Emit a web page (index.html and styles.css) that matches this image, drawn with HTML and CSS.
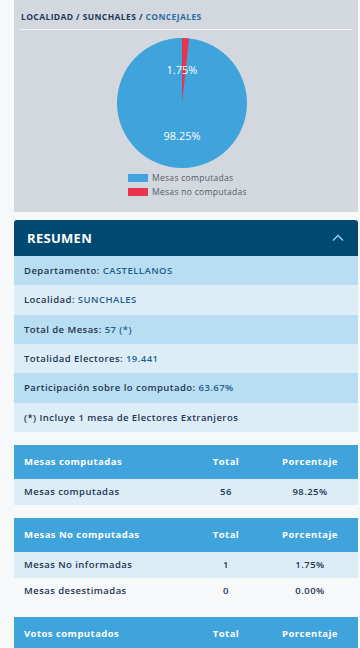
FILE: index.html
```html
<!DOCTYPE html>
<html lang="es">
<head>
    <meta charset="UTF-8">
    <meta name="viewport" content="width=device-width, initial-scale=1.0">
    <title>Resultados - Concejales</title>
    <link rel="stylesheet" href="styles.css">
</head>
<body>
    <div class="container">
        <!-- grafico -->
        <div class="chart-card">
            <div class="breadcrumb">
                <span>LOCALIDAD</span> / <span>SUNCHALES</span> / <span class="current">CONCEJALES</span>
            </div>
            <div class="pie-wrap">
                <svg class="pie" width="132" height="132" viewBox="0 0 132 132">
                    <circle cx="66" cy="66" r="65" fill="#3fa3dc"/>
                    <path d="M66 66 L66 1 A65 65 0 0 1 73.1 1.4 Z" fill="#e8344f"/>
                    <text x="66" y="37" class="pie-label">1.75%</text>
                    <text x="66" y="103" class="pie-label">98.25%</text>
                </svg>
            </div>
            <div class="legend">
                <div class="legend-item"><span class="swatch blue"></span>Mesas computadas</div>
                <div class="legend-item"><span class="swatch red"></span>Mesas no computadas</div>
            </div>
        </div>

        <!-- resumen -->
        <div class="resumen">
            <div class="resumen-head">
                <span>RESUMEN</span>
                <svg width="12" height="8" viewBox="0 0 12 8"><path d="M1 6.5 L6 1.5 L11 6.5" fill="none" stroke="#9fd0ee" stroke-width="1.3"/></svg>
            </div>
            <div class="row dark">Departamento: <span class="val">CASTELLANOS</span></div>
            <div class="row">Localidad: <span class="val">SUNCHALES</span></div>
            <div class="row dark">Total de Mesas: <span class="val">57 (*)</span></div>
            <div class="row">Totalidad Electores: <span class="val">19.441</span></div>
            <div class="row dark">Participación sobre lo computado: <span class="val">63.67%</span></div>
            <div class="row">(*) Incluye 1 mesa de Electores Extranjeros</div>
        </div>

        <table class="tabla">
            <thead>
                <tr><th>Mesas computadas</th><th>Total</th><th>Porcentaje</th></tr>
            </thead>
            <tbody>
                <tr class="light"><td>Mesas computadas</td><td>56</td><td>98.25%</td></tr>
            </tbody>
        </table>

        <table class="tabla">
            <thead>
                <tr><th>Mesas No computadas</th><th>Total</th><th>Porcentaje</th></tr>
            </thead>
            <tbody>
                <tr class="light"><td>Mesas No informadas</td><td>1</td><td>1.75%</td></tr>
                <tr><td>Mesas desestimadas</td><td>0</td><td>0.00%</td></tr>
            </tbody>
        </table>

        <table class="tabla">
            <thead>
                <tr><th>Votos computados</th><th>Total</th><th>Porcentaje</th></tr>
            </thead>
        </table>
    </div>
</body>
</html>
```

FILE: styles.css
```css
body {
    margin: 0;
    background: #f7f8fa;
    font-family: "Open Sans", "DejaVu Sans", sans-serif;
    color: #1c3550;
}

.container {
    padding: 0 2px 0 14px;
}

.chart-card {
    background: #d3d7de;
    padding: 9px 6px 14px 6px;
    height: 189px;
    box-sizing: content-box;
}

.breadcrumb {
    font-size: 8.5px;
    font-weight: 700;
    letter-spacing: 0.4px;
    color: #1c3a5a;
    padding: 2px 0 6px 1px;
    line-height: 12px;
    border-bottom: 1px solid #f2f4f7;
}

.breadcrumb .current {
    color: #2a6fa5;
}

.pie-wrap {
    display: flex;
    justify-content: center;
    padding-top: 7px;
    padding-right: 8px;
}

.pie-label {
    fill: #fff;
    font-size: 11px;
    text-anchor: middle;
    font-family: "Open Sans", sans-serif;
}

.legend {
    display: flex;
    flex-direction: column;
    align-items: flex-start;
    margin-left: 108px;
    margin-top: 4px;
    gap: 4px;
}

.legend-item {
    display: flex;
    align-items: center;
    font-size: 8.5px;
    letter-spacing: 0.3px;
    color: #555c66;
    line-height: 10px;
}

.swatch {
    display: inline-block;
    width: 20px;
    height: 8px;
    margin-right: 4px;
}

.swatch.blue { background: #3fa3dc; }
.swatch.red { background: #e8344f; }

.resumen {
    margin-top: 8px;
}

.resumen-head {
    background: #004a71;
    color: #fff;
    height: 36px;
    display: flex;
    align-items: center;
    justify-content: space-between;
    padding: 0 14px 0 13px;
    font-size: 13px;
    font-weight: 700;
    letter-spacing: 0.3px;
    border-radius: 3px 3px 0 0;
}

.row {
    background: #dcedf8;
    font-size: 9.5px;
    font-weight: 600;
    letter-spacing: 0.45px;
    padding: 0 10px;
    height: 29.33px;
    line-height: 29px;
}

.row.dark {
    background: #b9ddf1;
}

.row .val {
    color: #1f5f8f;
}

.tabla {
    width: 100%;
    border-collapse: collapse;
    margin-top: 13px;
    font-size: 9.5px;
    font-weight: 600;
    letter-spacing: 0.45px;
}

.tabla th {
    background: #3fa3dc;
    color: #fff;
    height: 34px;
    padding: 0;
    font-weight: 700;
}

.tabla th:first-child,
.tabla td:first-child {
    text-align: left;
    padding-left: 10px;
    width: 166px;
}

.tabla th:nth-child(2),
.tabla td:nth-child(2) {
    width: 72px;
    text-align: center;
}

.tabla td {
    height: 26px;
    padding: 0;
    text-align: center;
    color: #1c3550;
}

.tabla tr.light td {
    background: #dcedf8;
}
```
